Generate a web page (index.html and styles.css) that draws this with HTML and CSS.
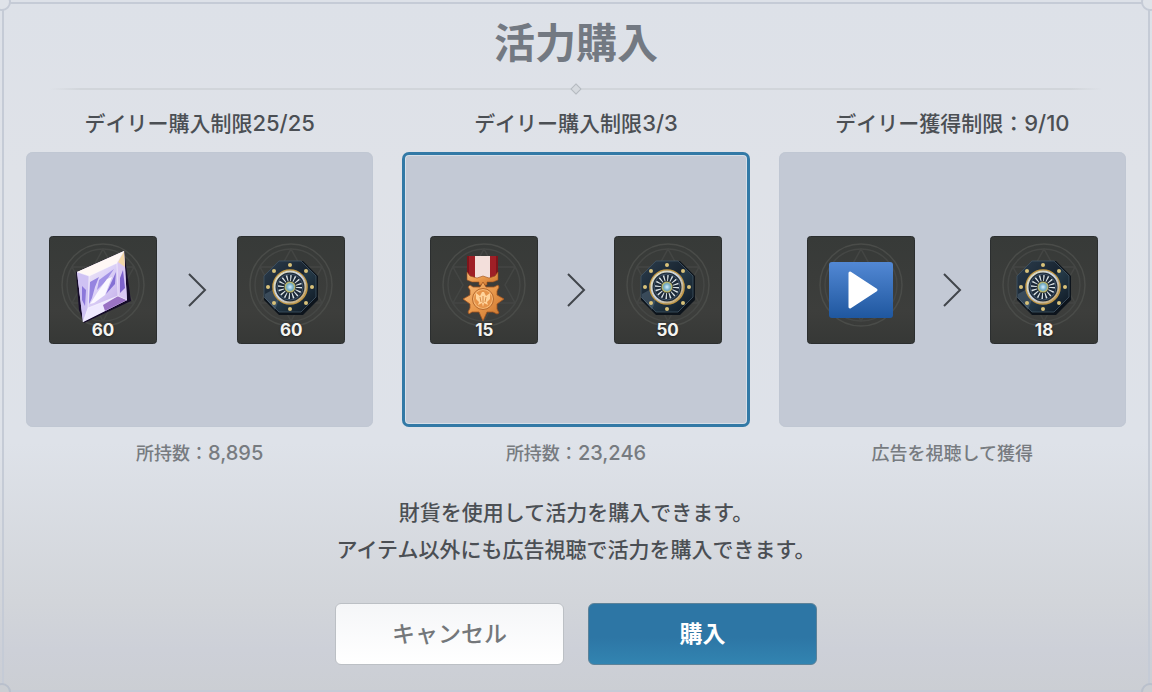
FILE: index.html
```html
<!DOCTYPE html>
<html lang="ja">
<head>
    <meta charset="UTF-8">
    <meta name="viewport" content="width=device-width, initial-scale=1.0">
    <title>活力購入</title>
    <link rel="stylesheet" href="styles.css">
</head>
<body>
    <!-- shared drawings -->
    <svg class="defs" width="0" height="0" aria-hidden="true">
        <defs>
            <linearGradient id="tileFill" x1="0" y1="0" x2="0" y2="1">
                <stop offset="0" stop-color="#373a38"/>
                <stop offset="0.7" stop-color="#3d3e3c"/>
                <stop offset="1" stop-color="#363836"/>
            </linearGradient>
            <linearGradient id="steel" x1="0" y1="0" x2="1" y2="1">
                <stop offset="0" stop-color="#2c3d4d"/>
                <stop offset="0.5" stop-color="#182430"/>
                <stop offset="0.52" stop-color="#263b49"/>
                <stop offset="1" stop-color="#0c1520"/>
            </linearGradient>
            <linearGradient id="ring" x1="0" y1="0" x2="1" y2="1">
                <stop offset="0" stop-color="#e2d9b0"/>
                <stop offset="0.5" stop-color="#c9d3e2"/>
                <stop offset="1" stop-color="#c9a052"/>
            </linearGradient>
            <radialGradient id="core">
                <stop offset="0" stop-color="#d5f0ff"/>
                <stop offset="0.6" stop-color="#6faac6"/>
                <stop offset="1" stop-color="#d8bd4c"/>
            </radialGradient>
            <linearGradient id="gemFill" x1="0" y1="0" x2="1" y2="1">
                <stop offset="0" stop-color="#fff4ee"/>
                <stop offset="0.45" stop-color="#ddd3f8"/>
                <stop offset="1" stop-color="#b79be2"/>
            </linearGradient>
            <linearGradient id="bronze" x1="0" y1="0" x2="1" y2="1">
                <stop offset="0" stop-color="#f8bc7c"/>
                <stop offset="0.5" stop-color="#e8974a"/>
                <stop offset="1" stop-color="#c56f2a"/>
            </linearGradient>
            <linearGradient id="playFill" x1="0" y1="0" x2="0" y2="1">
                <stop offset="0" stop-color="#5288d4"/>
                <stop offset="1" stop-color="#1f579f"/>
            </linearGradient>

            <symbol id="tile" viewBox="0 0 108 108">
                <rect x="0.5" y="0.5" width="107" height="107" rx="3" fill="url(#tileFill)" stroke="#2b2e2f"/>
                <g fill="none" stroke="#4a4c49" stroke-width="1.5">
                    <circle cx="54" cy="49" r="41"/>
                    <circle cx="54" cy="49" r="36" stroke="#454745"/>
                    <path stroke="#444644" d="M54 13L64 31L85 31L75 49L85 67L64 67L54 85L44 67L23 67L33 49L23 31L44 31Z"/>
                </g>
            </symbol>

            <symbol id="medallion" viewBox="0 0 108 108">
                <path fill="#0d141c" d="M42 25H66L81 40V64L66 79H42L27 64V40Z"/>
                <path fill="url(#steel)" stroke="#435666" stroke-width="0.8" d="M42 25H64L79 40V61L64 76H42L27 61V40Z"/>
                <path fill="#6f879c" opacity="0.35" d="M28 58L48 47L38 74L28 62Z"/>
                <g fill="#d9c27a">
                    <circle cx="53" cy="29" r="2"/><circle cx="53" cy="73" r="2"/>
                    <circle cx="31" cy="51" r="2"/><circle cx="75" cy="51" r="2"/>
                    <circle cx="37" cy="35" r="2"/><circle cx="69" cy="35" r="2"/>
                    <circle cx="37" cy="67" r="2"/><circle cx="69" cy="67" r="2"/>
                </g>
                <circle cx="53" cy="51" r="17" fill="#1c2938" stroke="#c2963f" stroke-width="1.6"/>
                <circle cx="53" cy="51" r="15.5" fill="none" stroke="url(#ring)" stroke-width="2"/>
                <circle cx="53" cy="51" r="13" fill="none" stroke="#40546a"/>
                <circle cx="53" cy="51" r="9" fill="none" stroke="#dce4e6" stroke-width="6" stroke-dasharray="1.2 2.33"/>
                <circle cx="53" cy="51" r="5.5" fill="url(#core)"/>
            </symbol>
        </defs>
    </svg>

    <main class="dialog">
        <div class="frame">
            <i class="corner top left"></i>
            <i class="corner top right"></i>
            <i class="corner bottom left"></i>
            <i class="corner bottom right"></i>
        </div>

        <h1>活力購入</h1>
        <div class="divider"><span class="diamond"></span></div>

        <div class="options">
            <section class="option">
                <h2>デイリー購入制限<span class="num">25/25</span></h2>
                <button type="button" class="card card-gem" aria-pressed="false" aria-label="60個で活力60を購入">
                    <span class="item">
                        <svg viewBox="0 0 108 108">
                            <use href="#tile"/>
                            <path fill="#150b29" d="M27 36L30 74L35 87L82 65L75 15Z"/>
                            <path fill="url(#gemFill)" d="M28 36L75 15L78 64L34 86Z"/>
                            <path fill="#fff8f5" d="M28 36L75 15L68 27L40 40Z"/>
                            <path fill="#cfc2f3" d="M28 36L40 40L39 72L34 86Z"/>
                            <path fill="#efe9ff" d="M34 86L39 72L69 60L78 64Z"/>
                            <path fill="#9a72c4" d="M54 69L69 60L78 64L56 75Z"/>
                            <path fill="#d9c8f3" d="M75 15L68 27L69 60L78 64Z"/>
                            <path fill="#f3d7a8" d="M75 15L69 26L76 31Z"/>
                            <path fill="#8b77da" d="M33 50L37 54L36 70L33 64Z"/>
                            <path fill="#9584e0" d="M41 46L50 41L46 51L43 62L40 68Z"/>
                            <path fill="#a292e6" d="M50 44L65 33L57 45L48 54Z"/>
                            <path fill="#8470d4" d="M67 36L66 48L57 58L62 47Z"/>
                            <path fill="#7d62cc" d="M74 34L76 52L71 57L71 42Z"/>
                            <path fill="#fbf8ff" d="M58 43L63 41L56 59L45 67L41 68L48 57Z"/>
                            <path fill="none" stroke="#fff" stroke-width="0.6" opacity="0.8" d="M28 36L40 40L68 27L75 15M40 40L39 72L34 86M68 27L69 60L78 64M39 72L69 60"/>
                        </svg>
                        <span class="count">60</span>
                    </span>
                    <svg class="arrow" viewBox="0 0 20 36"><path d="M2 2L18 18L2 34"/></svg>
                    <span class="item">
                        <svg viewBox="0 0 108 108"><use href="#tile"/><use href="#medallion"/></svg>
                        <span class="count">60</span>
                    </span>
                </button>
                <p class="owned">所持数：<span class="num">8,895</span></p>
            </section>

            <section class="option">
                <h2>デイリー購入制限<span class="num">3/3</span></h2>
                <button type="button" class="card selected" aria-pressed="true" aria-label="15個で活力50を購入">
                    <span class="item">
                        <svg viewBox="0 0 108 108">
                            <use href="#tile"/>
                            <path fill="#9f1f26" d="M37 20H68V38L61 42H44L37 38Z"/>
                            <path fill="#7d151b" d="M37 20H39V39L37 38ZM66 20H68V38L66 39Z"/>
                            <path fill="#f3dfdb" d="M45 20H60V42H45Z"/>
                            <path fill="url(#bronze)" stroke="#9b4f1c" stroke-width="0.6" d="M37 36L40 40L47 42L53 40L59 42L65 40L68 36V44L63 46H57V49H49V46H42L37 44Z"/>
                            <path fill="url(#bronze)" stroke="#a2541f" stroke-width="0.8" d="M53 46L56 51H64L68 49L69 51L67 55V59L74 63L67 68V73L69 77L67 78L63 76H57L53 85L49 76H42L39 78L38 76L40 72V68L33 63L40 59V54L38 51L40 49L43 51H50Z"/>
                            <circle cx="53" cy="63" r="10.5" fill="#f6b874" stroke="#b5662a"/>
                            <circle cx="53" cy="63" r="9" fill="#e59248"/>
                            <path fill="#ffd39a" d="M46 57L50 60L52 56H54L56 60L60 57V63L57 66L58 69L54 67L53 71L52 67L48 69L49 66L46 63Z"/>
                            <path fill="none" stroke="#cb7731" stroke-width="0.8" d="M50 61L51 66M53 60V67M56 61L55 66"/>
                        </svg>
                        <span class="count">15</span>
                    </span>
                    <svg class="arrow" viewBox="0 0 20 36"><path d="M2 2L18 18L2 34"/></svg>
                    <span class="item">
                        <svg viewBox="0 0 108 108"><use href="#tile"/><use href="#medallion"/></svg>
                        <span class="count">50</span>
                    </span>
                </button>
                <p class="owned">所持数：<span class="num">23,246</span></p>
            </section>

            <section class="option">
                <h2>デイリー獲得制限：<span class="num">9/10</span></h2>
                <button type="button" class="card" aria-pressed="false" aria-label="広告を視聴して活力18を獲得">
                    <span class="item">
                        <svg viewBox="0 0 108 108">
                            <use href="#tile"/>
                            <rect x="22" y="26" width="64" height="56" rx="3" fill="url(#playFill)"/>
                            <path fill="#fff" stroke="#fff" stroke-width="3" stroke-linejoin="round" d="M43 37L69 54L43 71Z"/>
                        </svg>
                    </span>
                    <svg class="arrow" viewBox="0 0 20 36"><path d="M2 2L18 18L2 34"/></svg>
                    <span class="item">
                        <svg viewBox="0 0 108 108"><use href="#tile"/><use href="#medallion"/></svg>
                        <span class="count">18</span>
                    </span>
                </button>
                <p class="owned">広告を視聴して獲得</p>
            </section>
        </div>

        <p class="description">財貨を使用して活力を購入できます。<br>アイテム以外にも広告視聴で活力を購入できます。</p>

        <div class="actions">
            <button type="button" class="btn cancel">キャンセル</button>
            <button type="button" class="btn buy">購入</button>
        </div>
    </main>
</body>
</html>
```
FILE: styles.css
```css
* {
    margin: 0;
    padding: 0;
    box-sizing: border-box;
}

body {
    font-family: 'Noto Sans CJK JP', sans-serif;
    color: #4b4f54;
}

button {
    font-family: inherit;
    cursor: pointer;
}

.defs {
    position: absolute;
}

.dialog {
    position: relative;
    min-height: 100vh;
    padding: 10px 26px 27px;
    overflow: hidden;
    text-align: center;
    background: linear-gradient(#dde1e8, #dfe2e8 25%, #dee2e9 64%, #d2d5da 87%, #cdd0d8 94%, #cbced3);
}

/* decorative outline */
.frame {
    position: absolute;
    inset: 2px 2px 0;
    border: 2px solid #c5cbd6;
    pointer-events: none;
}

.corner {
    position: absolute;
    width: 18px;
    height: 18px;
    border: 2px solid #c5cbd6;
    border-radius: 50%;
    background-color: #dfe3e9;
}

.corner.top {
    top: -11px;
}

.corner.bottom {
    bottom: -11px;
    border-color: #b9c0cc;
    background-color: #cbced3;
}

.corner.left {
    left: -11px;
}

.corner.right {
    right: -11px;
}

h1 {
    margin-bottom: 3px;
    font-size: 41px;
    line-height: 60px;
    font-weight: 700;
    color: #737982;
}

.divider {
    display: flex;
    align-items: center;
    justify-content: center;
    height: 32px;
    margin: 0 24px;
    background: linear-gradient(90deg, transparent, #d1d5da 3%, #d1d5da 97%, transparent) center / 100% 2px no-repeat;
}

.diamond {
    width: 8px;
    height: 8px;
    border: 1px solid #b5bac0;
    background-color: #d5d9de;
    transform: rotate(45deg);
}

.options {
    display: grid;
    grid-template-columns: repeat(3, 1fr);
    gap: 29px;
}

h2 {
    margin-bottom: 13px;
    font-size: 21px;
    line-height: 34px;
    font-weight: 500;
}

.num {
    font-family: Inter, sans-serif;
    font-size: 22px;
    line-height: 1;
}

.card {
    display: flex;
    align-items: center;
    justify-content: space-between;
    width: 100%;
    height: 275px;
    padding: 0 28px;
    border: none;
    border-radius: 7px;
    background-color: #c3c9d5;
    box-shadow: inset 0 0 1px #aeb9c4;
}

.card-gem {
    padding-left: 23px;
}

.card.selected {
    box-shadow: inset 0 0 0 3px #3279a6, inset 0 0 0 4px #d7dfe8;
}

.item {
    position: relative;
    width: 108px;
    height: 108px;
}

.item svg {
    display: block;
    width: 100%;
    height: 100%;
}

.count {
    position: absolute;
    right: 0;
    bottom: 4px;
    left: 0;
    font-family: Inter, sans-serif;
    font-size: 17px;
    line-height: 20px;
    font-weight: 700;
    color: #f4f4f1;
    text-shadow: 0 1px 2px #222;
}

.arrow {
    width: 20px;
    height: 36px;
    fill: none;
    stroke: #41454b;
    stroke-width: 2;
}

.owned {
    margin-top: 8px;
    font-size: 18px;
    line-height: 34px;
    font-weight: 500;
    color: #777b80;
}

.owned .num {
    font-size: 20px;
}

.description {
    margin-top: 24px;
    font-size: 21px;
    line-height: 37px;
    font-weight: 500;
}

.actions {
    display: flex;
    justify-content: center;
    gap: 24px;
    margin-top: 36px;
}

.btn {
    width: 229px;
    height: 62px;
    padding-bottom: 4px;
    border-radius: 6px;
    font-size: 23px;
    line-height: 32px;
}

.cancel {
    border: 1px solid #bcc0c5;
    background: linear-gradient(#f5f6f8, #fff);
    font-weight: 500;
    color: #74777a;
}

.buy {
    border: 1px solid #5c8299;
    background: linear-gradient(#2d76a5 55%, #3284b1);
    font-weight: 700;
    color: #fff;
}

@media (max-width: 1000px) {
    .options {
        grid-template-columns: 1fr;
    }
}
```
